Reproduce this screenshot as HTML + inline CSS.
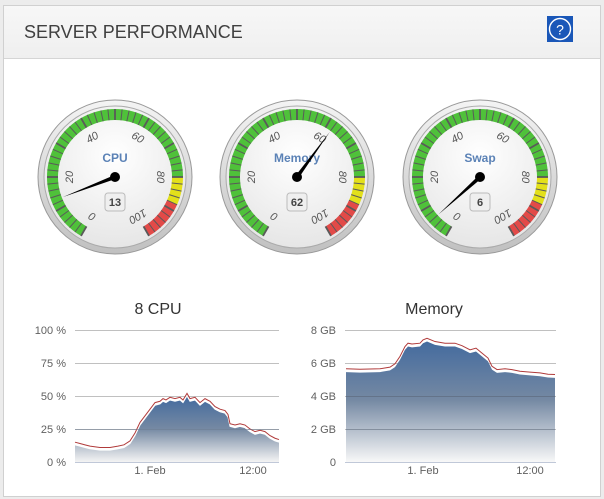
<!DOCTYPE html>
<html><head><meta charset="utf-8"><style>
body{margin:0;width:604px;height:499px;background:#ececec;font-family:"Liberation Sans",sans-serif;overflow:hidden}
.panel{position:absolute;left:3px;top:5px;width:596px;height:490px;background:#fff;border:1px solid #d0d0d0}
.hdr{height:52px;background:linear-gradient(#f7f7f7,#efefef);border-bottom:1px solid #d5d5d5;position:relative}
.hdr h1{margin:0;position:absolute;left:20px;top:16px;font-size:18px;font-weight:normal;color:#404040}
.help{position:absolute;left:543px;top:10px;width:26px;height:26px;background:#1a57b8}
</style></head><body>
<div class="panel"><div class="hdr"><h1>SERVER PERFORMANCE</h1>
<div class="help"><svg width="26" height="26"><circle cx="13" cy="13" r="10.5" fill="none" stroke="#fff" stroke-width="1.4"/><text x="13" y="18.5" fill="#fff" font-size="14" text-anchor="middle" font-family="Liberation Sans">?</text></svg></div></div></div>
<svg id="s" width="604" height="499" style="position:absolute;left:0;top:0" font-family="Liberation Sans, sans-serif">
<defs>
<radialGradient id="face" cx="0.5" cy="0.35" r="0.7"><stop offset="0" stop-color="#fff"/><stop offset="1" stop-color="#e4e4e4"/></radialGradient>
<linearGradient id="bez" x1="0" y1="0" x2="0" y2="1"><stop offset="0" stop-color="#f4f4f4"/><stop offset="1" stop-color="#c0c0c0"/></linearGradient>
<linearGradient id="ar" gradientUnits="userSpaceOnUse" x1="0" y1="395" x2="0" y2="462"><stop offset="0" stop-color="#41699e"/><stop offset="0.5" stop-color="#7589a3"/><stop offset="1" stop-color="#f4f4f4"/></linearGradient>
<linearGradient id="ar2" gradientUnits="userSpaceOnUse" x1="0" y1="338" x2="0" y2="462"><stop offset="0" stop-color="#41699e"/><stop offset="0.5" stop-color="#7589a3"/><stop offset="1" stop-color="#f8f8f8"/></linearGradient>
</defs>
<g id="gauges"></g>
<text x="158" y="314" font-size="16" fill="#333" text-anchor="middle">8 CPU</text>
<g stroke="#c0c0c0" stroke-width="1"><line x1="75" y1="330.5" x2="279" y2="330.5"/><line x1="75" y1="363.5" x2="279" y2="363.5"/><line x1="75" y1="396.5" x2="279" y2="396.5"/><line x1="75" y1="429.5" x2="279" y2="429.5"/></g>
<g font-size="11" fill="#606060" text-anchor="end"><text x="66" y="334">100 %</text><text x="66" y="367">75 %</text><text x="66" y="400">50 %</text><text x="66" y="433">25 %</text><text x="66" y="466">0 %</text></g>
<polygon id="cpuA" fill="url(#ar)"/><polyline id="cpuW" fill="none" stroke="#fff" stroke-width="1"/><polyline id="cpuR" fill="none" stroke="#b03a3a" stroke-width="1"/>
<line x1="75" y1="429.5" x2="279" y2="429.5" stroke="#6a7a90" stroke-opacity="0.5"/>
<line x1="75" y1="462.5" x2="279" y2="462.5" stroke="#c0c8d8"/>
<g font-size="11" fill="#606060" text-anchor="middle"><text x="150" y="474">1. Feb</text><text x="253" y="474">12:00</text></g>
<text x="434" y="314" font-size="16" fill="#333" text-anchor="middle">Memory</text>
<g stroke="#c0c0c0"><line x1="345" y1="330.5" x2="556" y2="330.5"/><line x1="345" y1="363.5" x2="556" y2="363.5"/><line x1="345" y1="396.5" x2="556" y2="396.5"/><line x1="345" y1="429.5" x2="556" y2="429.5"/></g>
<g font-size="11" fill="#606060" text-anchor="end"><text x="336" y="334">8 GB</text><text x="336" y="367">6 GB</text><text x="336" y="400">4 GB</text><text x="336" y="433">2 GB</text><text x="336" y="466">0</text></g>
<polygon id="memA" fill="url(#ar2)"/><polyline id="memR" fill="none" stroke="#b03a3a" stroke-width="1"/>
<g stroke="#556070" stroke-opacity="0.5"><line x1="346" y1="396.5" x2="555" y2="396.5"/><line x1="346" y1="429.5" x2="555" y2="429.5"/></g>
<line x1="345" y1="462.5" x2="556" y2="462.5" stroke="#c0c8d8"/>
<g font-size="11" fill="#606060" text-anchor="middle"><text x="423" y="474">1. Feb</text><text x="530" y="474">12:00</text></g>
<g font-size="11" fill="#555" font-style="italic" id="lbls"></g>
<text x="115" y="162" font-size="12" font-weight="bold" fill="#5b82b6" text-anchor="middle">CPU</text>
<text x="297" y="162" font-size="12" font-weight="bold" fill="#5b82b6" text-anchor="middle">Memory</text>
<text x="480" y="162" font-size="12" font-weight="bold" fill="#5b82b6" text-anchor="middle">Swap</text>
<g font-size="11" font-weight="bold" fill="#444" text-anchor="middle">
<rect x="105" y="193" width="20" height="18" rx="3" fill="#efefef" stroke="#bbb"/><text x="115" y="206">13</text>
<rect x="287" y="193" width="20" height="18" rx="3" fill="#efefef" stroke="#bbb"/><text x="297" y="206">62</text>
<rect x="470" y="193" width="20" height="18" rx="3" fill="#efefef" stroke="#bbb"/><text x="480" y="206">6</text></g>
<g id="needles"></g>
</svg>
<script>
var NS="http://www.w3.org/2000/svg",g=document.getElementById('gauges'),nd=document.getElementById('needles'),lb=document.getElementById('lbls');
function el(p,t,a){var e=document.createElementNS(NS,t);for(var k in a)e.setAttribute(k,a[k]);p.appendChild(e);return e}
function pt(cx,cy,r,deg){var a=deg*Math.PI/180;return [cx+r*Math.sin(a),cy-r*Math.cos(a)]}
[[115,177,13],[297,177,62],[480,177,6]].forEach(function(G){
var cx=G[0],cy=G[1];
el(g,'circle',{cx:cx,cy:cy,r:77,fill:'url(#bez)',stroke:'#999'});
el(g,'circle',{cx:cx,cy:cy,r:71,fill:'url(#face)',stroke:'#aaa'});
for(var i=0;i<50;i++){var v0=i*2,v1=v0+2,a0=-150+v0*3,a1=-150+v1*3;
var c=v0<80?'#4fc13a':(v0<88?'#e3e01a':'#e24a48');
var p1=pt(cx,cy,68,a0),p2=pt(cx,cy,68,a1),p3=pt(cx,cy,57,a1),p4=pt(cx,cy,57,a0);
el(g,'path',{d:'M'+p1+' A68 68 0 0 1 '+p2+' L'+p3+' A57 57 0 0 0 '+p4+'Z',fill:c});
var q1=pt(cx,cy,68,a0),q2=pt(cx,cy,57,a0);
el(g,'line',{x1:q1[0],y1:q1[1],x2:q2[0],y2:q2[1],stroke:'#5a5a5a',"stroke-width":(i%5==0)?1.8:1});}
var e1=pt(cx,cy,68,150),e2=pt(cx,cy,57,150);el(g,'line',{x1:e1[0],y1:e1[1],x2:e2[0],y2:e2[1],stroke:'#5a5a5a',"stroke-width":1.8});
for(var v=0;v<=100;v+=20){var a=-150+v*3,p=pt(cx,cy,46,a);
var t=el(lb,'text',{x:p[0],y:p[1]+4,'text-anchor':'middle',transform:'rotate('+a+' '+p[0]+' '+p[1]+')'});t.textContent=v;}
var na=-150+G[2]*3,tip=pt(cx,cy,56,na),b1=pt(cx,cy,2,na+90),b2=pt(cx,cy,2,na-90);
el(nd,'polygon',{points:tip+' '+b1+' '+b2,fill:'#000'});
el(nd,'circle',{cx:cx,cy:cy,r:5,fill:'#000'});});
function build(data,x0,y0,s,idA,lines){var pts=data.map(function(d){return [d[0],y0-d[1]*s]});
document.getElementById(idA).setAttribute('points',pts.join(' ')+' '+data[data.length-1][0]+','+y0+' '+x0+','+y0);
lines.forEach(function(l){document.getElementById(l[0]).setAttribute('points',data.map(function(d){return [d[0],y0-(d[1]+l[1])*s-l[2]]}).join(' '))});}
var cpu=[[75,13],[80,12],[85,11],[90,10],[100,9],[110,9],[118,10],[124,11],[130,14],[135,20],[140,28],[145,33],[150,38],[155,43],[160,44],[163,46],[166,45],[170,47],[175,46],[180,47],[183,45],[187,50],[190,46],[195,47],[200,43],[205,46],[210,44],[215,40],[220,38],[225,37],[228,34],[230,27],[235,26],[240,27],[245,26],[250,23],[255,21],[260,22],[265,21],[270,18],[275,16],[279,15]];
build(cpu,75,462,1.32,'cpuA',[['cpuW',0,0],['cpuR',2,0]]);
var mem=[[346,5.45],[360,5.42],[380,5.45],[390,5.55],[395,5.75],[400,6.2],[405,6.8],[408,7.0],[412,6.95],[420,7.0],[423,7.2],[427,7.3],[435,7.1],[445,7.0],[455,7.0],[462,6.85],[470,6.6],[476,6.7],[482,6.4],[488,6.1],[492,5.6],[497,5.4],[505,5.45],[512,5.4],[520,5.3],[530,5.25],[540,5.2],[548,5.12],[555,5.1]];
build(mem,346,462,16.5,'memA',[['memR',0.2,0]]);
</script>
</body></html>
